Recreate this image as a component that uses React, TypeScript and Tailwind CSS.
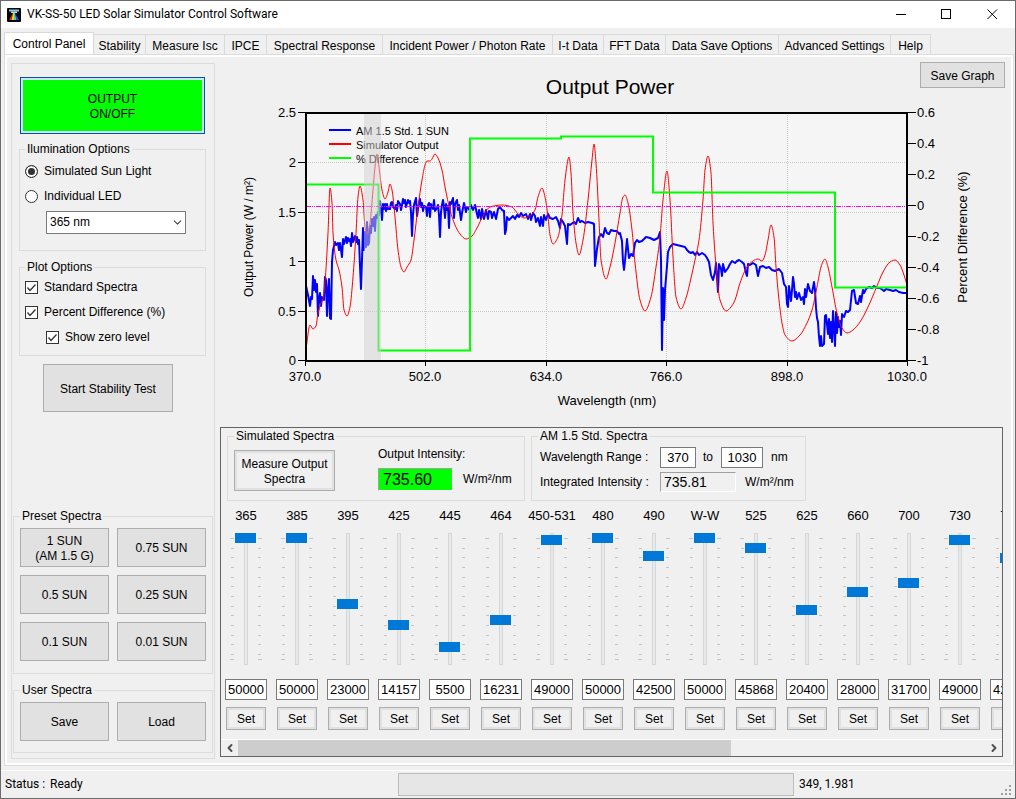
import React, { useState } from 'react';
import { ChevronDown, ChevronLeft, ChevronRight } from 'lucide-react';
import clsx from 'clsx';

type Point = [number, number];

const tabs = [
    { title: 'Control Panel', width: 'w-[90px]' },
    { title: 'Stability', width: 'w-[52px]' },
    { title: 'Measure Isc', width: 'w-[79px]' },
    { title: 'IPCE', width: 'w-[42px]' },
    { title: 'Spectral Response', width: 'w-[116px]' },
    { title: 'Incident Power / Photon Rate', width: 'w-[170px]' },
    { title: 'I-t Data', width: 'w-[51px]' },
    { title: 'FFT Data', width: 'w-[62px]' },
    { title: 'Data Save Options', width: 'w-[113px]' },
    { title: 'Advanced Settings', width: 'w-[112px]' },
    { title: 'Help', width: 'w-[40px]' },
];

const channels = [
    { name: '365', value: 50000 },
    { name: '385', value: 50000 },
    { name: '395', value: 23000 },
    { name: '425', value: 14157 },
    { name: '445', value: 5500 },
    { name: '464', value: 16231 },
    { name: '450-531', value: 49000 },
    { name: '480', value: 50000 },
    { name: '490', value: 42500 },
    { name: 'W-W', value: 50000 },
    { name: '525', value: 45868 },
    { name: '625', value: 20400 },
    { name: '660', value: 28000 },
    { name: '700', value: 31700 },
    { name: '730', value: 49000 },
    { name: '770', value: 42000 },
];

const sliderTicks = [5, 15, 24, 34, 44, 53, 63, 73, 82, 92, 102, 111, 121, 126];

// Measured output of the simulator
const simulator: Point[] = [
    [306, 349], [310, 325], [313, 329], [316, 326], [318, 313], [321, 303], [323, 299], [325, 282], [328, 233], [330, 188],
    [332, 203], [333, 233], [336, 260], [339, 270], [342, 287], [344, 310], [347, 316], [350, 307], [353, 277], [356, 233],
    [358, 197], [360, 186], [363, 200], [365, 227], [367, 234], [370, 223], [373, 190], [375, 167], [377, 154], [379, 167],
    [382, 190], [385, 199], [388, 192], [390, 184], [392, 190], [395, 217], [398, 250], [401, 267], [404, 272], [407, 267],
    [411, 260], [414, 240], [418, 207], [422, 180], [425, 165], [427, 161], [430, 161], [432, 159], [435, 154], [438, 158],
    [442, 170], [445, 187], [450, 210], [455, 225], [460, 234], [466, 239], [472, 236], [477, 228], [483, 216], [490, 207],
    [502, 205], [512, 207], [518, 214], [524, 218], [530, 216], [535, 210], [538, 197], [542, 188], [545, 197], [548, 217],
    [550, 235], [553, 244], [558, 237], [562, 215], [565, 180], [569, 157], [571, 173], [573, 213], [576, 243], [579, 255],
    [583, 240], [588, 200], [592, 160], [594, 144], [596, 163], [599, 220], [601, 260], [606, 279], [610, 267], [615, 243],
    [620, 213], [623, 197], [625, 195], [628, 203], [632, 230], [635, 263], [640, 300], [645, 311], [651, 297], [656, 267],
    [660, 237], [663, 200], [667, 171], [670, 200], [673, 257], [676, 297], [681, 309], [686, 298], [691, 278], [695, 260],
    [699, 240], [703, 200], [705, 170], [708, 156], [711, 173], [713, 223], [717, 277], [720, 300], [726, 311], [731, 307],
    [735, 300], [740, 283], [747, 267], [753, 261], [758, 259], [762, 261], [765, 255], [768, 240], [771, 225], [774, 237],
    [776, 267], [779, 300], [782, 323], [785, 335], [792, 341], [800, 335], [807, 323], [812, 310], [817, 287], [821, 267],
    [825, 259], [828, 267], [832, 287], [837, 313], [842, 328], [847, 333], [853, 330], [860, 322], [868, 307], [877, 286],
    [883, 272], [890, 262], [895, 260], [900, 265], [904, 275], [907, 285],
];

// AM 1.5 standard spectrum
const standard: Point[] = [
    [306, 286], [308, 295], [310, 306], [311, 297], [312, 299], [313, 276], [314, 290], [315, 280], [316, 292], [317, 284],
    [318, 316], [319, 298], [320, 293], [321, 306], [322, 297], [324, 300], [325, 277], [326, 280], [327, 316], [328, 290],
    [329, 279], [330, 318], [331, 319], [332, 262], [333, 250], [335, 242], [336, 245], [338, 243], [339, 250], [340, 243],
    [342, 257], [343, 239], [344, 244], [346, 237], [347, 243], [348, 238], [349, 241], [350, 239], [351, 246], [352, 233],
    [353, 242], [355, 236], [356, 242], [357, 237], [358, 244], [359, 240], [360, 266], [361, 289], [362, 260], [363, 228],
    [364, 250], [365, 232], [366, 247], [367, 222], [368, 245], [369, 243], [370, 226], [371, 233], [372, 219], [373, 226],
    [374, 217], [375, 231], [376, 215], [377, 218], [378, 212], [379, 215], [380, 201], [382, 220], [383, 204], [384, 209],
    [385, 204], [386, 211], [387, 204], [388, 209], [390, 209], [391, 203], [392, 202], [393, 207], [395, 209], [396, 205],
    [397, 211], [398, 201], [400, 204], [401, 210], [402, 205], [403, 199], [404, 203], [405, 200], [406, 207], [408, 200],
    [409, 203], [410, 201], [411, 212], [412, 236], [413, 214], [414, 205], [416, 198], [417, 216], [418, 209], [419, 203],
    [420, 199], [421, 207], [422, 203], [423, 211], [424, 206], [426, 207], [427, 216], [428, 205], [429, 203], [430, 217],
    [431, 204], [433, 209], [434, 200], [435, 211], [437, 208], [438, 205], [439, 215], [440, 237], [441, 212], [442, 205],
    [443, 200], [444, 207], [445, 218], [446, 204], [447, 210], [448, 206], [449, 228], [450, 202], [451, 204], [453, 198],
    [454, 218], [455, 204], [457, 200], [458, 210], [459, 205], [461, 220], [462, 213], [464, 203], [466, 212], [467, 207],
    [469, 209], [470, 211], [471, 205], [473, 210], [475, 205], [477, 214], [478, 218], [479, 210], [481, 219], [482, 209],
    [484, 219], [486, 210], [488, 219], [489, 211], [491, 212], [492, 218], [494, 212], [496, 219], [498, 209], [500, 207],
    [502, 210], [504, 211], [505, 234], [506, 230], [507, 217], [509, 220], [511, 218], [513, 216], [515, 219], [517, 215],
    [519, 217], [521, 213], [523, 216], [526, 214], [528, 219], [530, 214], [531, 220], [533, 213], [535, 216], [536, 222],
    [538, 218], [540, 226], [541, 217], [543, 226], [544, 215], [546, 220], [548, 214], [550, 218], [553, 219], [556, 217],
    [558, 221], [560, 228], [561, 219], [563, 222], [565, 226], [567, 244], [568, 224], [570, 225], [574, 222], [576, 224],
    [578, 218], [580, 222], [582, 221], [585, 223], [588, 222], [592, 223], [594, 224], [595, 266], [597, 249], [599, 237],
    [601, 234], [603, 237], [605, 228], [607, 233], [609, 234], [611, 230], [614, 231], [617, 231], [619, 234], [620, 233],
    [622, 241], [623, 262], [624, 270], [625, 261], [627, 239], [629, 258], [631, 254], [633, 256], [635, 243], [637, 240],
    [639, 242], [642, 241], [646, 237], [650, 238], [654, 240], [658, 238], [660, 232], [661, 260], [662, 350], [663, 288],
    [664, 320], [665, 290], [667, 266], [668, 252], [670, 247], [673, 244], [677, 245], [681, 246], [685, 247], [687, 250],
    [689, 252], [691, 253], [693, 252], [695, 255], [697, 252], [699, 255], [702, 253], [705, 255], [707, 258], [709, 262],
    [711, 275], [713, 280], [715, 272], [716, 263], [718, 292], [719, 264], [721, 269], [722, 276], [723, 264], [725, 272],
    [728, 268], [730, 264], [732, 261], [735, 263], [737, 261], [739, 260], [742, 262], [744, 264], [746, 273], [747, 276],
    [748, 264], [750, 265], [753, 263], [756, 265], [758, 276], [760, 267], [763, 266], [766, 268], [769, 267], [772, 270],
    [775, 271], [779, 269], [782, 273], [784, 284], [786, 287], [787, 304], [788, 307], [789, 286], [790, 294], [791, 301],
    [792, 290], [793, 277], [794, 284], [795, 297], [796, 292], [797, 299], [799, 293], [801, 300], [803, 297], [804, 304],
    [805, 289], [806, 297], [808, 284], [810, 291], [812, 293], [814, 282], [815, 290], [816, 308], [817, 318], [818, 322],
    [819, 337], [820, 346], [821, 336], [822, 346], [824, 344], [825, 316], [826, 315], [828, 334], [829, 319], [830, 338],
    [831, 322], [832, 342], [833, 311], [834, 328], [835, 346], [836, 312], [837, 333], [838, 317], [839, 327], [840, 321],
    [841, 335], [842, 314], [844, 317], [846, 311], [848, 312], [850, 310], [852, 291], [854, 290], [856, 303], [858, 304],
    [860, 296], [861, 302], [863, 290], [864, 293], [866, 289], [869, 287], [872, 288], [874, 286], [877, 288], [880, 288],
    [884, 291], [886, 289], [890, 290], [893, 291], [896, 290], [899, 292], [903, 293], [907, 293],
];

const leftAxis = [
    { label: '2.5', y: 112 }, { label: '2', y: 162 }, { label: '1.5', y: 212 },
    { label: '1', y: 261 }, { label: '0.5', y: 311 }, { label: '0', y: 360 },
];
const rightAxis = ['0.6', '0.4', '0.2', '0', '-0.2', '-0.4', '-0.6', '-0.8', '-1'];
const bottomAxis = ['370.0', '502.0', '634.0', '766.0', '898.0', '1030.0'];
const rightY = (i: number) => 112 + i * 31;
const bottomX = (i: number) => Math.round(305 + i * 120.4);

// Monotone cubic curve, so that peaks never overshoot
function smooth(pts: Point[]) {
    const slope = pts.slice(1).map((p, i) => (p[1] - pts[i][1]) / (p[0] - pts[i][0]));
    const tangent = pts.map((_, i) => {
        if (i === 0) return slope[0];
        if (i === pts.length - 1) return slope[i - 1];
        const a = slope[i - 1];
        const b = slope[i];
        return a * b <= 0 ? 0 : (2 * a * b) / (a + b);
    });
    let d = `M${pts[0][0]} ${pts[0][1]}`;
    for (let i = 1; i < pts.length; i++) {
        const h = (pts[i][0] - pts[i - 1][0]) / 3;
        d += `C${pts[i - 1][0] + h} ${pts[i - 1][1] + tangent[i - 1] * h} ${pts[i][0] - h} ${pts[i][1] - tangent[i] * h} ${pts[i][0]} ${pts[i][1]}`;
    }
    return d;
}

function Chart() {
    return (
        <svg viewBox="220 100 783 327" className="block w-full h-auto text-[13px]" role="img" aria-label="Output Power">
            <rect x="306" y="113" width="601" height="248" fill="#f5f5f5" />
            <g stroke="#c8c8c8" strokeDasharray="1 1" shapeRendering="crispEdges">
                {[1, 2, 3, 4].map((i) => (
                    <line key={i} x1={bottomX(i) + 0.5} x2={bottomX(i) + 0.5} y1="113" y2="360" />
                ))}
                {leftAxis.slice(1, 5).map((t) => (
                    <line key={t.label} x1="306" x2="907" y1={t.y + 0.5} y2={t.y + 0.5} />
                ))}
            </g>
            <g fill="none">
                <path d={'M' + standard.map((p) => p.join(' ')).join('L')} stroke="#00f" strokeWidth="2" strokeLinejoin="round" />
                <path d={smooth(simulator)} stroke="#f00" />
                <path
                    d="M306 184.5H378.500V350.500H470V138.500H561V136.500H653V192.500H835V287.500H907"
                    stroke="#0f0"
                    strokeWidth="2"
                />
                <path d="M306 206.500H907" stroke="#f0f" strokeDasharray="5 1 1 1 1 1" />
            </g>
            <g strokeWidth="2">
                <line x1="329" x2="351" y1="130" y2="130" stroke="#00f" />
                <line x1="329" x2="351" y1="144" y2="144" stroke="#f00" />
                <line x1="329" x2="351" y1="158" y2="158" stroke="#0f0" />
            </g>
            <g className="text-[11px]">
                <text x="356" y="135">AM 1.5 Std. 1 SUN</text>
                <text x="356" y="149">Simulator Output</text>
                <text x="356" y="163">% Difference</text>
            </g>
            <rect x="364" y="112" width="17" height="249" fill="#d1d1d1" fillOpacity="0.5" />
            <rect x="306" y="113" width="601" height="248" fill="none" stroke="#000" strokeWidth="2" />

            <g stroke="#000" shapeRendering="crispEdges">
                {leftAxis.map((t) => <line key={t.label} x1="298" x2="305" y1={t.y + 0.5} y2={t.y + 0.5} />)}
                {rightAxis.map((t, i) => <line key={t} x1="908" x2="916" y1={rightY(i) + 0.5} y2={rightY(i) + 0.5} />)}
                {bottomAxis.map((t, i) => <line key={t} x1={bottomX(i) + 0.5} x2={bottomX(i) + 0.5} y1="361" y2="366" />)}
            </g>
            <g textAnchor="end">
                {leftAxis.map((t) => <text key={t.label} x="296" y={t.y + 5}>{t.label}</text>)}
            </g>
            {rightAxis.map((t, i) => <text key={t} x="917" y={rightY(i) + 5}>{t}</text>)}
            <g textAnchor="middle">
                {bottomAxis.map((t, i) => <text key={t} x={bottomX(i)} y="381">{t}</text>)}
                <text x="607" y="405">Wavelength (nm)</text>
                <text transform="translate(253 237) rotate(-90)" className="text-[12px]">Output Power (W / m²)</text>
                <text transform="translate(967 237) rotate(-90)">Percent Difference (%)</text>
            </g>
        </svg>
    );
}

function AppIcon() {
    return (
        <svg viewBox="0 0 14 14" className="size-[14px]" aria-hidden="true">
            <rect width="14" height="14" rx="1" fill="#050508" />
            <path d="M2 1.500h10v2H2z" fill="#8fc3ea" />
            <path d="M4 3.500h6v1.500H4z" fill="#b5d8f0" />
            <path d="M6 5L2 12h2.500z" fill="#e02020" />
            <path d="M6 5h1v7H4.500z" fill="#f0d020" />
            <path d="M7 5h1l1.500 7H7z" fill="#30d8a0" />
            <path d="M8 5l4 7H9.500z" fill="#2848f0" />
        </svg>
    );
}

function Group({ title, legendClass, className, children }: { title: string; legendClass?: string; className?: string; children: React.ReactNode }) {
    return (
        <fieldset className={clsx('border border-[#dcdcdc] min-w-0', className)}>
            <legend className={clsx('px-[2px]', legendClass)}>{title}</legend>
            {children}
        </fieldset>
    );
}

function Btn({ className, children }: { className?: string; children: React.ReactNode }) {
    return (
        <button type="button" className={clsx('border border-[#adadad] bg-[#e1e1e1] pt-[2px] text-center', className)}>
            {children}
        </button>
    );
}

function Check({ label, className }: { label: string; className?: string }) {
    return (
        <label className={clsx('flex h-[25px] items-center gap-[6px]', className)}>
            <span className="grid">
                <input type="checkbox" defaultChecked className="peer col-start-1 row-start-1 size-[13px] appearance-none border border-[#333] bg-white" />
                <svg viewBox="0 0 13 13" className="pointer-events-none invisible col-start-1 row-start-1 size-[13px] peer-checked:visible">
                    <path d="M2.500 6.500L5 9.500L10.500 3.500" fill="none" stroke="#333" strokeWidth="1.300" />
                </svg>
            </span>
            {label}
        </label>
    );
}

function Radio({ label, value, mode, onChange }: { label: string; value: string; mode: string; onChange: (v: string) => void }) {
    return (
        <label className="flex h-[25px] items-center gap-[6px]">
            <input
                type="radio"
                name="illumination"
                checked={mode === value}
                onChange={() => onChange(value)}
                className="size-[13px] appearance-none rounded-full border border-[#333] bg-white checked:bg-[#333] checked:shadow-[inset_0_0_0_2px_#fff]"
            />
            {label}
        </label>
    );
}

function LeftPanel() {
    const [mode, setMode] = useState('sun');

    return (
        <aside className="flex w-[204px] shrink-0 flex-col border border-[#dcdcdc] px-px pb-[5px] pt-[13px]">
            <button type="button" className="ml-[7px] mr-[8px] h-[57px] border border-[#0054a0] bg-[#0f0] pt-[2px] shadow-[inset_0_0_0_2px_#cce4f7]">
                OUTPUT<br />ON/OFF
            </button>

            <Group title="Ilumination Options" className="ml-[6px] mr-[7px] mt-[8px] pb-[16px] pl-[5px] pt-[2px]">
                <Radio label="Simulated Sun Light" value="sun" mode={mode} onChange={setMode} />
                <Radio label="Individual LED" value="led" mode={mode} onChange={setMode} />
                <div className="ml-[21px] mt-[2px] grid w-[140px] items-center">
                    <select aria-label="LED" className="col-start-1 row-start-1 h-[23px] appearance-none border border-[#7a7a7a] bg-white pl-[3px]">
                        <option>365 nm</option>
                    </select>
                    <ChevronDown className="pointer-events-none col-start-1 row-start-1 mr-[2px] size-[13px] justify-self-end text-[#444]" strokeWidth={2} />
                </div>
            </Group>

            <Group title="Plot Options" className="ml-[6px] mr-[7px] mt-[9px] pb-[5px] pl-[5px]">
                <Check label="Standard Spectra" />
                <Check label="Percent Difference (%)" />
                <Check label="Show zero level" className="ml-[21px]" />
            </Group>

            <Btn className="ml-[30px] mt-[8px] h-[48px] w-[130px]">Start Stability Test</Btn>

            <Group title="Preset Spectra" legendClass="ml-[6px]" className="mt-auto pb-[12px] pt-[4px]">
                <div className="mx-[6px] grid grid-cols-2 gap-[8px]">
                    <Btn className="h-[39px]">1 SUN<br />(AM 1.5 G)</Btn>
                    <Btn className="h-[39px]">0.75 SUN</Btn>
                    <Btn className="h-[39px]">0.5 SUN</Btn>
                    <Btn className="h-[39px]">0.25 SUN</Btn>
                    <Btn className="h-[39px]">0.1 SUN</Btn>
                    <Btn className="h-[39px]">0.01 SUN</Btn>
                </div>
            </Group>

            <Group title="User Spectra" legendClass="ml-[6px]" className="mt-[9px] pb-[11px] pt-[4px]">
                <div className="mx-[6px] grid grid-cols-2 gap-[8px]">
                    <Btn className="h-[39px]">Save</Btn>
                    <Btn className="h-[39px]">Load</Btn>
                </div>
            </Group>
        </aside>
    );
}

function Channel({ name, value }: { name: string; value: number }) {
    const [level, setLevel] = useState(value);

    return (
        <div className="flex w-[42px] shrink-0 flex-col items-center">
            <div className="flex w-full justify-center whitespace-nowrap text-[13px]">{name}</div>
            <div className="mt-[10px] grid">
                <svg width="32" height="132" className="col-start-1 row-start-1" shapeRendering="crispEdges" aria-hidden="true">
                    {sliderTicks.map((y, i) => {
                        const long = i === 0 || i === sliderTicks.length - 1;
                        return (
                            <g key={y} fill="#c4c4c4">
                                <rect x={long ? 0 : 1} y={y} width={long ? 4 : 3} height="1" />
                                <rect x="28" y={y} width={long ? 4 : 3} height="1" />
                            </g>
                        );
                    })}
                    <rect x="14" y="0" width="4" height="132" fill="#d6d6d6" />
                    <rect x="15" y="1" width="2" height="130" fill="#e7eaea" />
                </svg>
                <input
                    type="range"
                    min="0"
                    max="50000"
                    value={level}
                    onChange={(e) => setLevel(Number(e.target.value))}
                    aria-label={`${name} level`}
                    className="col-start-1 row-start-1 ml-[5px] h-[132px] w-[21px] appearance-none bg-transparent [direction:rtl] [writing-mode:vertical-lr] [&::-webkit-slider-thumb]:h-[10px] [&::-webkit-slider-thumb]:w-[21px] [&::-webkit-slider-thumb]:appearance-none [&::-webkit-slider-thumb]:bg-[#0078d7]"
                />
            </div>
            <input
                type="text"
                value={level}
                onChange={(e) => setLevel(Number(e.target.value) || 0)}
                aria-label={`${name} value`}
                className="mt-[14px] h-[21px] w-full border border-[#7a7a7a] bg-white text-center text-[13px]"
            />
            <button type="button" className="mt-[7px] h-[23px] w-[40px] border border-[#adadad] pt-[2px] shadow-[inset_0_0_0_2px_#e1e1e1]">
                Set
            </button>
        </div>
    );
}

function SpectraPanel() {
    return (
        <section className="mr-[2px] overflow-hidden border border-[#646464] pt-px">
            <div className="flex gap-[6px] pl-[6px]">
                <Group title="Simulated Spectra" legendClass="ml-[6px]" className="w-[298px] pb-[8px] pt-[3px]">
                    <div className="flex">
                        <button type="button" className="ml-[6px] mt-[3px] h-[41px] w-[101px] border border-[#adadad] pt-[2px] shadow-[inset_0_0_0_2px_#e1e1e1]">
                            Measure Output<br />Spectra
                        </button>
                        <div className="ml-[43px]">
                            <label htmlFor="intensity" className="block">Output Intensity:</label>
                            <div className="mt-[6px] flex items-center gap-[10px]">
                                <input
                                    id="intensity"
                                    readOnly
                                    defaultValue="735.60"
                                    className="h-[23px] w-[75px] border border-b-white border-l-[#a0a0a0] border-r-white border-t-[#a0a0a0] bg-[#0f0] pl-[4px] text-[16px]"
                                />
                                <span>W/m²/nm</span>
                            </div>
                        </div>
                    </div>
                </Group>
                <Group title="AM 1.5 Std. Spectra" legendClass="ml-[6px]" className="w-[275px] pb-[8px] pt-[3px]">
                    <div className="ml-[8px] flex h-[21px] items-center">
                        <label htmlFor="from" className="w-[120px]">Wavelength Range :</label>
                        <input id="from" defaultValue="370" className="h-[21px] w-[36px] border border-[#7a7a7a] bg-white text-center text-[13px]" />
                        <label htmlFor="to" className="w-[25px] pl-[7px]">to</label>
                        <input id="to" defaultValue="1030" className="h-[21px] w-[42px] border border-[#7a7a7a] bg-white text-center text-[13px]" />
                        <span className="pl-[8px]">nm</span>
                    </div>
                    <div className="ml-[8px] mt-[4px] flex h-[20px] items-center">
                        <label htmlFor="integrated" className="w-[120px]">Integrated Intensity :</label>
                        <input
                            id="integrated"
                            readOnly
                            defaultValue="735.81"
                            className="h-[20px] w-[76px] border border-b-white border-l-[#a0a0a0] border-r-white border-t-[#a0a0a0] pl-[3px] text-[14px]"
                        />
                        <span className="pl-[9px]">W/m²/nm</span>
                    </div>
                </Group>
            </div>

            <div className="mt-[7px] flex gap-[9px] overflow-hidden pl-[4px]">
                {channels.map((c) => (
                    <Channel key={c.name} name={c.name} value={c.value} />
                ))}
            </div>

            <div className="mt-[9px] flex h-[17px] border-t border-white">
                <button type="button" aria-label="Scroll left" className="flex w-[17px] items-center justify-center">
                    <ChevronLeft className="size-[12px] text-[#505050]" strokeWidth={4} />
                </button>
                <div className="flex-1">
                    <div className="h-full w-[66%] bg-[#cdcdcd]" />
                </div>
                <button type="button" aria-label="Scroll right" className="flex w-[17px] items-center justify-center">
                    <ChevronRight className="size-[12px] text-[#505050]" strokeWidth={4} />
                </button>
            </div>
        </section>
    );
}

export default function App() {
    const [tab, setTab] = useState('Control Panel');

    return (
        <div className="flex min-h-screen flex-col border border-[#6b6b6b] bg-[#f0f0f0] font-['Liberation_Sans',sans-serif] text-[12px] leading-[15px] text-black">
            <header className="flex h-[27px] items-center bg-white pl-[6px]">
                <AppIcon />
                <h1 className="ml-[6px] flex-1 font-[Roboto,sans-serif]">VK-SS-50 LED Solar Simulator Control Software</h1>
                <button type="button" aria-label="Minimize" className="flex w-[46px] justify-center">
                    <svg width="11" height="11" shapeRendering="crispEdges"><path d="M0 5.500H10" stroke="#000" /></svg>
                </button>
                <button type="button" aria-label="Maximize" className="flex w-[45px] justify-center">
                    <svg width="11" height="11" shapeRendering="crispEdges"><path d="M.5.500H9.500V9.500H.5z" fill="none" stroke="#000" /></svg>
                </button>
                <button type="button" aria-label="Close" className="flex w-[46px] justify-center">
                    <svg width="11" height="11"><path d="M.5.500L10 10M10 .5L.5 10" stroke="#000" /></svg>
                </button>
            </header>

            <nav role="tablist" className="flex items-end pl-[3px] pt-[4px]">
                {tabs.map((t) => (
                    <button
                        key={t.title}
                        type="button"
                        role="tab"
                        aria-selected={tab === t.title}
                        onClick={() => setTab(t.title)}
                        className={clsx(
                            'whitespace-nowrap border-r border-t border-[#d9d9d9]',
                            t.width,
                            tab === t.title ? '-mb-px h-[23px] border-l bg-white' : 'h-[20px] pt-[4px]'
                        )}
                    >
                        {t.title}
                    </button>
                ))}
            </nav>

            <div className="ml-[3px] mr-px flex flex-1 border border-[#dcdcdc]">
                <main className="flex min-w-0 flex-1 gap-[5px] border-2 border-white pl-[4px] pr-[6px]">
                    <div className="flex pb-[4px] pt-[6px]">
                        <LeftPanel />
                    </div>
                    <div className="min-w-0 flex-1 pb-[6px]">
                        <div className="flex h-[43px] pl-[80px] pt-[5px]">
                            <h2 className="flex-1 pt-[13px] text-center text-[21px] leading-[24px]">Output Power</h2>
                            <Btn className="h-[26px] w-[85px]">Save Graph</Btn>
                        </div>
                        <div className="mr-[2px]">
                            <Chart />
                        </div>
                        <SpectraPanel />
                    </div>
                </main>
            </div>

            <footer className="mt-[4px] flex h-[28px] items-center border-t border-white pl-[4px] font-[Roboto,sans-serif]">
                <span className="w-[45px]">Status :</span>
                <span className="flex-1">Ready</span>
                <div role="progressbar" aria-label="Progress" className="h-[23px] w-[396px] border border-[#bcbcbc] bg-[#e6e6e6]" />
                <span className="w-[207px] pl-[5px]">349, 1.981</span>
                <svg width="11" height="11" className="mr-[3px] self-end mb-[2px]" fill="#a0a0a0" aria-hidden="true">
                    <path d="M8 0h2v2H8zM4 4h2v2H4zM8 4h2v2H8zM0 8h2v2H0zM4 8h2v2H4zM8 8h2v2H8z" />
                </svg>
            </footer>
        </div>
    );
}
